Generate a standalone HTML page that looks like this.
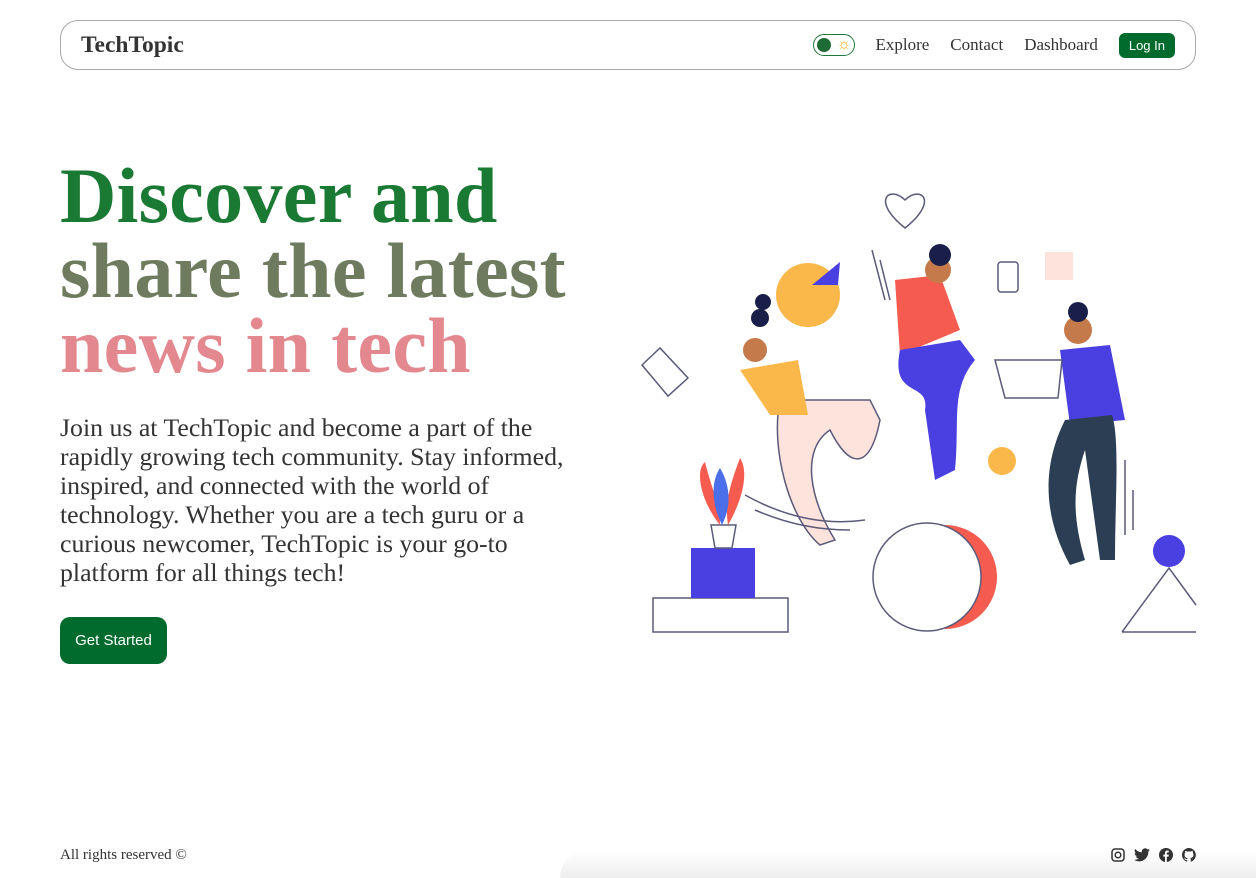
<!DOCTYPE html>
<html><head><meta charset="utf-8"><style>
*{margin:0;padding:0;box-sizing:border-box}
body{width:1256px;height:878px;background:#fff;font-family:"Liberation Serif",serif;color:#222;position:relative;overflow:hidden}
nav{position:absolute;left:60px;top:20px;width:1136px;height:50px;border:1px solid #aaa;border-radius:18px;display:flex;align-items:center;padding:0 20px}
.logo{font-size:23.5px;font-weight:bold;color:#333}
.right{margin-left:auto;display:flex;align-items:center;font-size:17px;color:#333}
.tog{width:42px;height:22px;border:1.5px solid #1f7a3a;border-radius:11px;position:relative;margin-right:20px}
.tog:before{content:"";position:absolute;left:3px;top:3px;width:14px;height:14px;border-radius:50%;background:#1f6b35}
.tog span{position:absolute;right:3px;top:0px;font-size:16px;line-height:19px;color:#f5b21a}
.right a{margin-right:21px}
.btn{background:#006b2c;color:#fff;font-family:"Liberation Sans",sans-serif;font-size:13px;padding:5px 10px;border-radius:6px}
h1{position:absolute;left:60px;top:158px;font-size:78px;line-height:75px;font-weight:bold;letter-spacing:0.3px}
.l1{color:#1a7a34}.l2{color:#6f7b5e}.l3{color:#e3888f}
p{position:absolute;left:60px;top:413px;width:535px;font-size:25.8px;line-height:29px;color:#333}
.gs{position:absolute;left:60px;top:617px;width:107px;height:47px;background:#006b2c;color:#fff;border-radius:10px;font-family:"Liberation Sans",sans-serif;font-size:15px;display:flex;align-items:center;justify-content:center}
.foot{position:absolute;left:60px;top:847px;font-size:15px;color:#333}
.icons{position:absolute;right:60px;top:848px;display:flex;gap:9px}
.fade{position:absolute;left:560px;top:850px;width:700px;height:28px;background:linear-gradient(#fff,#eee);border-radius:30px 0 0 0}
</style></head><body>
<div class="fade"></div>
<nav><div class="logo">TechTopic</div><div class="right"><div class="tog"><span>☼</span></div><a>Explore</a><a>Contact</a><a>Dashboard</a><span class="btn">Log In</span></div></nav>
<h1><span class="l1">Discover and</span><br><span class="l2">share the latest</span><br><span class="l3">news in tech</span></h1>
<p>Join us at TechTopic and become a part of the rapidly growing tech community. Stay informed, inspired, and connected with the world of technology. Whether you are a tech guru or a curious newcomer, TechTopic is your go-to platform for all things tech!</p>
<div class="gs">Get Started</div>
<svg style="position:absolute;left:640px;top:185px" width="560" height="450" viewBox="640 185 560 450" fill="none" stroke="#5a5a7a" stroke-width="1.5">
<circle cx="808" cy="295" r="32" fill="#fbb84a" stroke="none"/>
<polygon points="812,285 840,262 838,285" fill="#4a3fe0" stroke="none"/>
<rect x="1045" y="252" width="28" height="28" fill="#fde3dc" stroke="none"/>
<circle cx="1002" cy="461" r="14" fill="#fbb84a" stroke="none"/>
<path d="M905 228 C870 200 890 185 905 200 C920 185 940 200 905 228Z" fill="#fff"/>
<circle cx="945" cy="577" r="52" fill="#f55c4f" stroke="none"/>
<circle cx="927" cy="577" r="54" fill="#fff"/>
<rect x="653" y="598" width="135" height="34" fill="#fff"/>
<rect x="691" y="548" width="64" height="50" fill="#4a3fe0" stroke="none"/>
<path d="M711 525 L736 525 L732 548 L715 548Z" fill="#fff"/>
<path d="M720 525 C700 500 695 470 705 462 C712 490 720 505 720 525Z" fill="#f55c4f" stroke="none"/>
<path d="M728 525 C745 495 748 470 740 458 C728 490 725 505 728 525Z" fill="#f55c4f" stroke="none"/>
<path d="M722 525 C710 500 712 480 720 468 C730 485 732 505 722 525Z" fill="#4a6fe8" stroke="none"/>
<circle cx="1169" cy="551" r="16" fill="#4a3fe0" stroke="none"/>
<path d="M1122 632 L1169 568 L1196 605 M1122 632 L1196 632"/>
<path d="M642 365 L660 348 L688 378 L668 396Z" fill="#fff"/>
<path d="M780 400 C770 450 790 520 820 545 L835 540 C810 500 800 450 830 430 C850 470 870 470 880 420 L870 400Z" fill="#fde3dc"/>
<path d="M740 370 L798 360 L808 415 L770 415Z" fill="#fbb84a" stroke="none"/>
<circle cx="755" cy="350" r="12" fill="#c47a4a" stroke="none"/>
<circle cx="760" cy="318" r="9" fill="#1a1f4a" stroke="none"/>
<circle cx="763" cy="302" r="8" fill="#1a1f4a" stroke="none"/>
<path d="M895 280 L940 275 L960 330 L900 355Z" fill="#f55c4f" stroke="none"/>
<circle cx="938" cy="270" r="13" fill="#c47a4a" stroke="none"/>
<circle cx="940" cy="255" r="11" fill="#1a1f4a" stroke="none"/>
<path d="M900 350 C890 400 930 380 925 410 L935 480 L955 470 C960 420 950 390 975 360 L960 340Z" fill="#4a3fe0" stroke="none"/>
<rect x="998" y="262" width="20" height="30" rx="3" fill="#fff"/>
<path d="M1060 350 L1110 345 L1125 420 L1070 425Z" fill="#4a3fe0" stroke="none"/>
<circle cx="1078" cy="330" r="14" fill="#c47a4a" stroke="none"/>
<circle cx="1078" cy="312" r="10" fill="#1a1f4a" stroke="none"/>
<path d="M1065 420 C1040 470 1045 520 1070 565 L1085 560 C1070 510 1075 480 1085 450 L1100 560 L1115 560 C1115 500 1120 440 1112 415Z" fill="#2c3e54" stroke="none"/>
<path d="M995 360 L1062 360 L1058 398 L1005 398Z" fill="#fff"/>
<path d="M745 495 C790 520 830 525 865 520 M755 510 C790 525 820 530 850 530 M1125 460 L1125 535 M1133 490 L1133 530 M872 250 L885 300 M880 260 L890 300"/>
</svg>
<div class="foot">All rights reserved ©</div>
<div class="icons">
<svg width="14" height="14" viewBox="0 0 14 14" fill="none" stroke="#333" stroke-width="1.5"><rect x="1" y="1" width="12" height="12" rx="3"/><circle cx="7" cy="7" r="2.8"/></svg>
<svg width="16" height="14" viewBox="0 0 24 20" fill="#333"><path d="M24 2.4a10 10 0 0 1-2.8.8A5 5 0 0 0 23.3.4a10 10 0 0 1-3.1 1.2A4.9 4.9 0 0 0 11.8 6 14 14 0 0 1 1.7.9a4.9 4.9 0 0 0 1.5 6.6A4.9 4.9 0 0 1 1 6.9 4.9 4.9 0 0 0 4.9 11.8a5 5 0 0 1-2.2.1 4.9 4.9 0 0 0 4.6 3.4A9.9 9.9 0 0 1 0 17.3 14 14 0 0 0 7.5 19.5c9.1 0 14-7.5 14-14v-.6A10 10 0 0 0 24 2.4z"/></svg>
<svg width="14" height="14" viewBox="0 0 14 14"><circle cx="7" cy="7" r="7" fill="#333"/><path d="M7.8 14V8.6h1.7l.3-2H7.8V5.4c0-.6.2-1 1-1h1V2.6a12 12 0 0 0-1.5-.1C6.9 2.5 6 3.4 6 5v1.6H4.3v2H6V14z" fill="#fff"/></svg>
<svg width="14" height="14" viewBox="0 0 16 16" fill="#333"><path d="M8 0a8 8 0 0 0-2.5 15.6c.4.1.5-.2.5-.4v-1.4c-2.2.5-2.7-1-2.7-1-.4-.9-.9-1.2-.9-1.2-.7-.5.1-.5.1-.5.8.1 1.2.8 1.2.8.7 1.2 1.9.9 2.3.7.1-.5.3-.9.5-1.1-1.8-.2-3.6-.9-3.6-4 0-.9.3-1.6.8-2.1-.1-.2-.4-1 .1-2.1 0 0 .7-.2 2.2.8a7.5 7.5 0 0 1 4 0c1.5-1 2.2-.8 2.2-.8.4 1.1.2 1.9.1 2.1.5.6.8 1.3.8 2.1 0 3.1-1.9 3.7-3.6 3.9.3.3.5.8.5 1.5v2.2c0 .2.1.5.6.4A8 8 0 0 0 8 0z"/></svg>
</div>
</body></html>
